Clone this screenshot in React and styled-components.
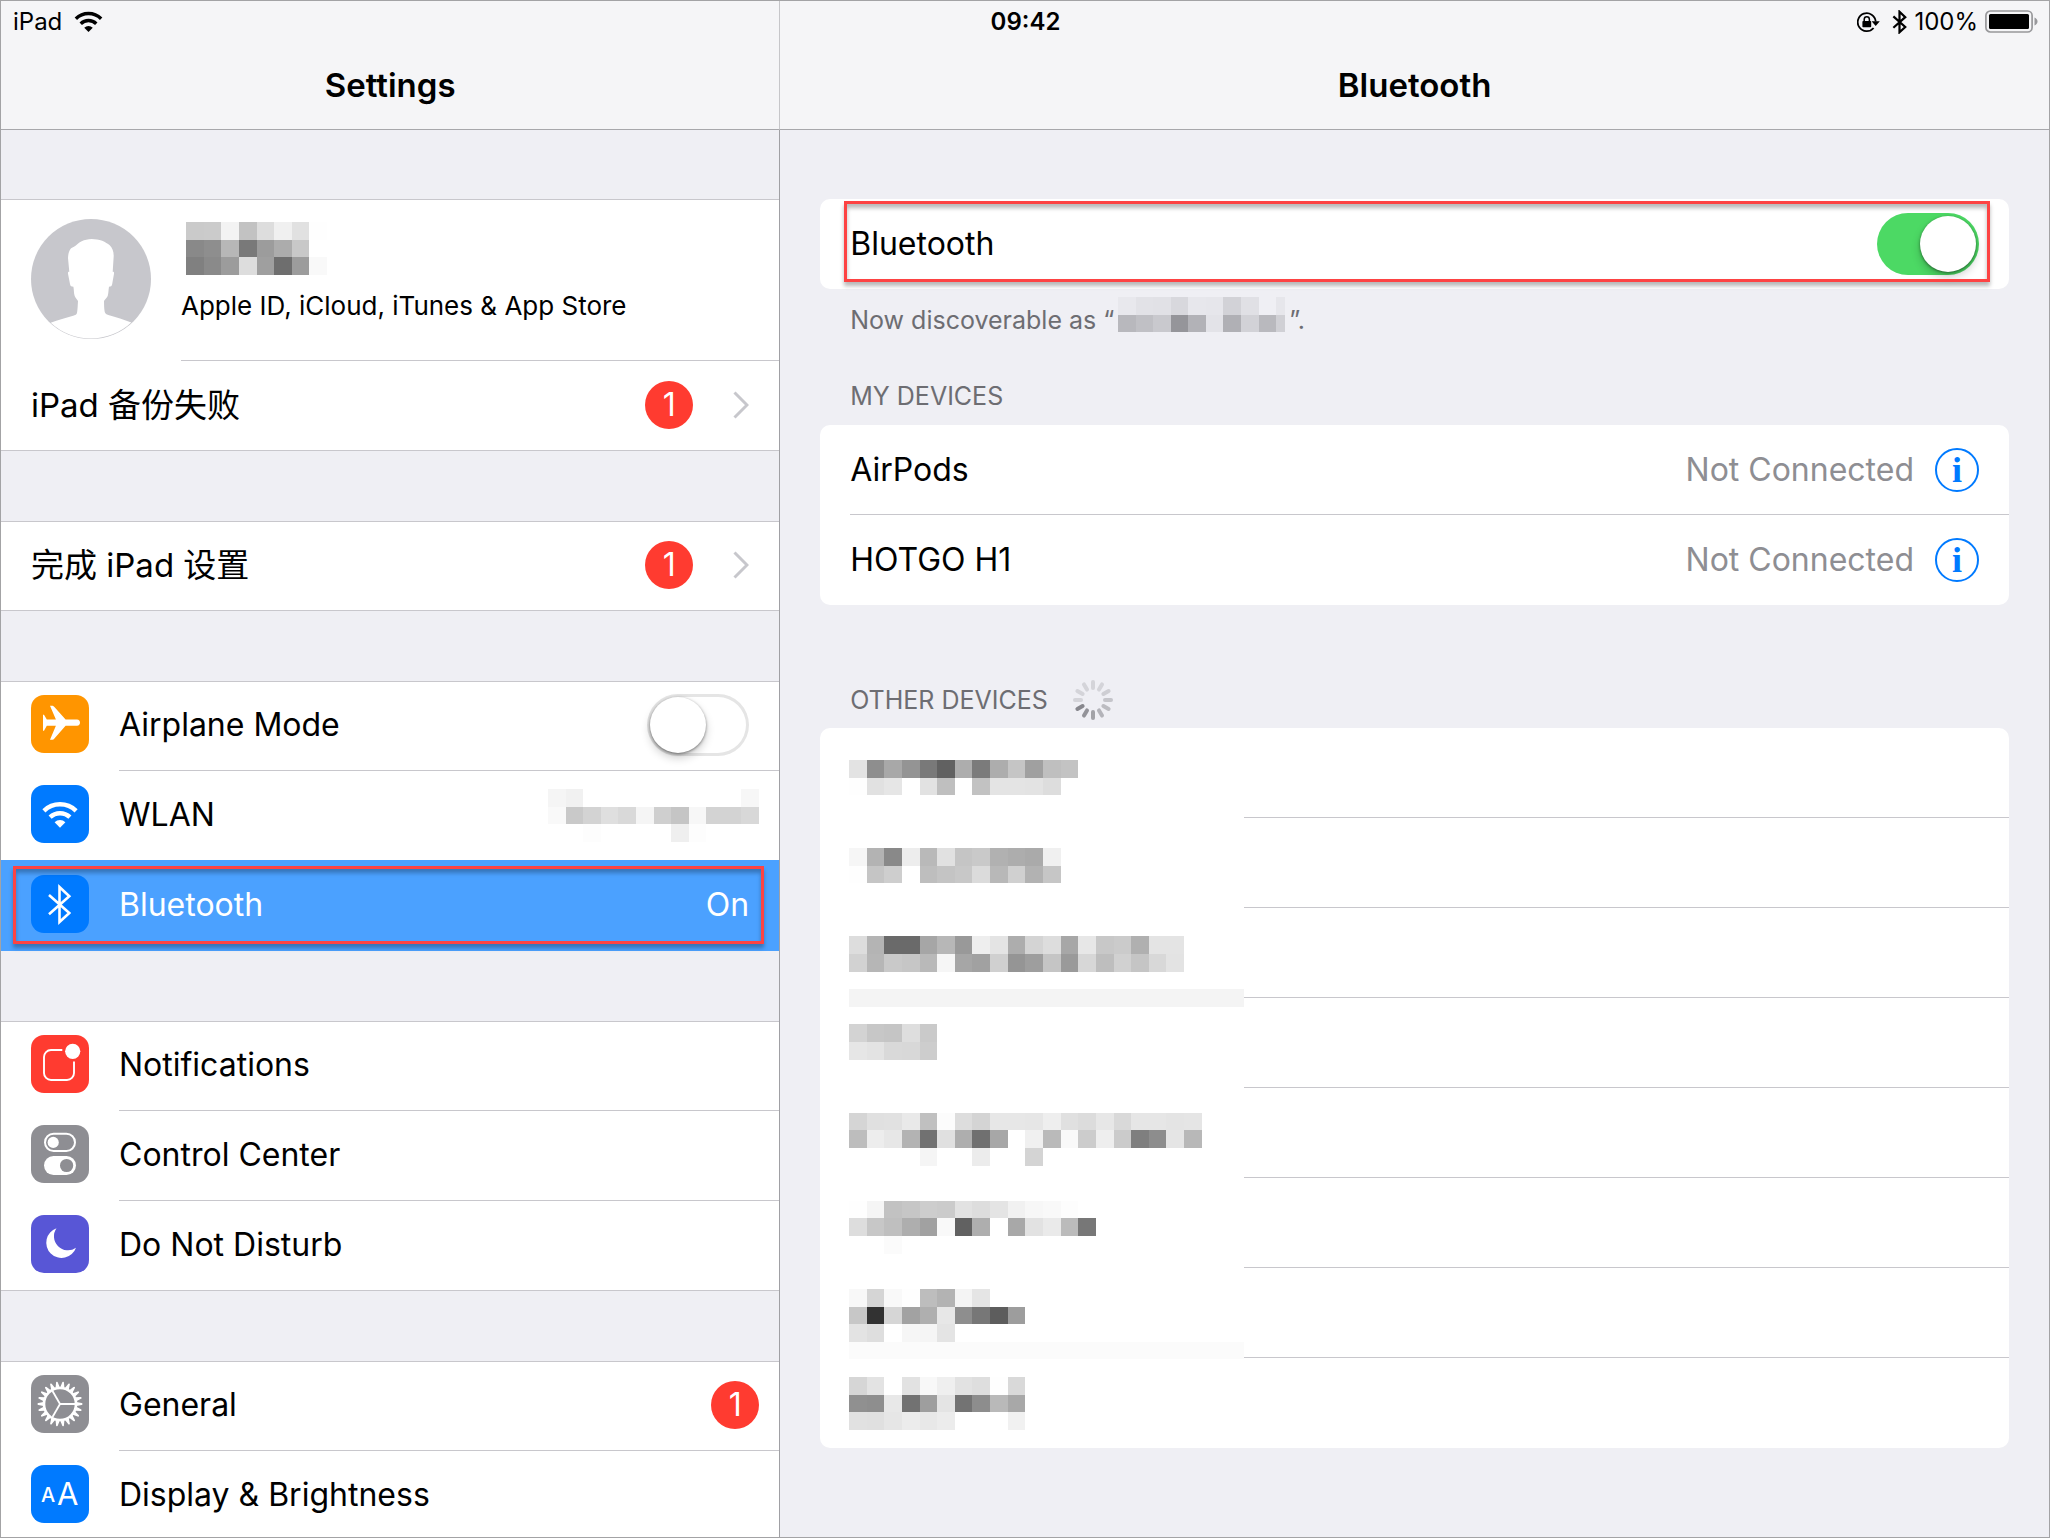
import React, { useState } from 'react';
import styled, { css, createGlobalStyle } from 'styled-components';

const GlobalStyle = createGlobalStyle`
  *, *::before, *::after { box-sizing: border-box; }
  body {
    margin: 0;
    background: #efeff4;
    color: #000;
    font-family: Inter, "Noto Sans CJK SC", sans-serif;
    font-size: 32px;
    line-height: 40px;
  }
  h1, h2, p, ul { margin: 0; padding: 0; }
`;

/* ---------- frame ---------- */

const Screen = styled.div`
  display: grid;
  grid-template-columns: 38% minmax(0, 1fr);
  grid-template-rows: 129px minmax(0, 1fr);
  height: 100vh;
  overflow: hidden;
  border: 1px solid #a3a3a5;
`;

const StatusBar = styled.header`
  grid-area: 1 / 1 / 2 / 3;
  z-index: 1;
  height: 42px;
  display: grid;
  grid-template-columns: 1fr auto 1fr;
  align-items: center;
  padding: 0 11px 0 12px;
  font-size: 24px;
  line-height: 28px;
`;

const StatusSide = styled.div`
  display: flex;
  align-items: center;
  justify-content: ${props => props.$end ? 'flex-end' : 'flex-start'};
  gap: ${props => props.$end ? '7px' : '12px'};
`;

const Clock = styled.time`
  font-weight: 600;
`;

const NavBar = styled.div`
  grid-area: 1 / ${props => props.$column};
  display: flex;
  align-items: flex-end;
  justify-content: center;
  padding-bottom: 24px;
  background: #f5f5f7;
  border-bottom: 1px solid #a7a7ab;
  ${props => props.$column === 2 && css`border-left: 1px solid #c6c6c9;`}
`;

const Title = styled.h1`
  font-size: 33px;
  line-height: 40px;
  font-weight: 600;
`;

const Sidebar = styled.nav`
  grid-area: 2 / 1;
  display: flex;
  flex-direction: column;
  gap: 70px;
  padding-top: 69px;
  overflow: hidden;
`;

const Detail = styled.main`
  grid-area: 2 / 2;
  padding: 69px 40px 0;
  border-left: 1px solid #a0a0a4;
  overflow: hidden;
`;

/* ---------- sidebar ---------- */

const Group = styled.ul`
  flex: none;
  list-style: none;
  background: #fff;
  box-shadow: inset 0 1px #c8c7cc, inset 0 -1px #c8c7cc;
`;

const Item = styled.li`
  position: relative;
  display: flex;
  align-items: center;
  gap: 30px;
  height: ${props => props.$tall ? '162px' : '90px'};
  padding-left: 30px;
  ${props => props.$selected && css`
    height: 91px;
    margin-top: -1px;
    padding-top: 1px;
    background: #4ba1ff;
    color: #fff;
  `}
`;

const Tile = styled.svg`
  flex: none;
  width: 58px;
  height: 58px;
  margin-bottom: 4px;
  border-radius: 13px;
  background: ${props => props.$color};
`;

const ItemBody = styled.div`
  flex: 1;
  align-self: stretch;
  display: flex;
  align-items: center;
  gap: 40px;
  padding: 0 ${props => props.$tight ? '20px' : '30px'} 1px 0;
  border-bottom: 1px solid #c8c7cc;
  ${Item}:last-child & { border-bottom-color: transparent; }
`;

const ItemLink = styled.a`
  flex: 1;
  color: inherit;
  text-decoration: none;
  &:lang(zh) { font-size: 33px; }
`;

const ItemLabel = styled.label`
  flex: 1;
`;

const Badge = styled.span`
  display: flex;
  align-items: center;
  justify-content: center;
  width: 48px;
  height: 48px;
  border-radius: 50%;
  background: #ff3b30;
  color: #fff;
`;

const Profile = styled.a`
  flex: 1;
  display: flex;
  flex-direction: column;
  gap: 15px;
  padding-bottom: 15px;
  color: inherit;
  text-decoration: none;
  font-size: 26px;
  line-height: 32px;
  svg { margin-left: 5px; }
`;

const Avatar = styled.svg`
  flex: none;
  width: 120px;
  height: 120px;
  margin-bottom: 2px;
`;

/* ---------- controls ---------- */

const Switch = styled.input.attrs({ type: 'checkbox', role: 'switch' })`
  appearance: none;
  flex: none;
  display: block;
  width: 102px;
  height: 62px;
  margin: 0;
  padding: 3px;
  border-radius: 31px;
  background: #fff;
  box-shadow: inset 0 0 0 3px #e5e5e5;
  &::before {
    content: "";
    display: block;
    width: 56px;
    height: 56px;
    border-radius: 50%;
    background: #fff;
    box-shadow: 0 5px 10px rgba(0, 0, 0, 0.2), 0 1px 3px rgba(0, 0, 0, 0.45);
  }
  &:checked {
    background: #4cd964;
    box-shadow: none;
  }
  &:checked::before { margin-left: 40px; }
`;

const InfoButton = styled.button`
  flex: none;
  width: 44px;
  height: 44px;
  padding: 0;
  border: 2px solid #007aff;
  border-radius: 50%;
  background: none;
  color: #007aff;
  font: bold 36px/36px "Liberation Serif", serif;
`;

// red marker drawn over a row
const Marker = styled.div`
  position: absolute;
  inset: ${props => props.$inset};
  border: 3px solid #fd4343;
  box-shadow: 0 4px 4px rgba(0, 0, 0, 0.28), inset 0 4px 4px rgba(0, 0, 0, 0.28);
  pointer-events: none;
`;

/* ---------- detail ---------- */

const Card = styled.ul`
  position: relative;
  list-style: none;
  border-radius: 10px;
  background: #fff;
`;

const Row = styled.li`
  display: flex;
  align-items: center;
  gap: 21px;
  height: 90px;
  margin-left: 30px;
  padding-right: 30px;
  border-bottom: 1px solid #c8c7cc;
  &:last-of-type { border-bottom-color: transparent; }
`;

const RowLabel = styled.label`
  flex: 1;
`;

const Name = styled.span`
  flex: 1;
`;

const State = styled.span`
  color: #8e8e93;
`;

const Note = styled.p`
  display: flex;
  align-items: center;
  gap: 4px;
  height: 62px;
  padding-left: 30px;
  color: #6d6d72;
  font-size: 25px;
  line-height: 32px;
  svg { margin-bottom: 11px; }
`;

const SectionTitle = styled.h2`
  display: flex;
  align-items: center;
  gap: 25px;
  height: ${props => props.$after === 'card' ? '123px' : '74px'};
  padding: ${props => props.$after === 'card' ? '67px' : '15px'} 30px 0;
  color: #6d6d72;
  font-size: 25px;
  line-height: 32px;
  font-weight: 400;
`;

const Cover = styled.div`
  position: absolute;
  top: 32px;
  left: 29px;
  background: #fff;
`;

/* ---------- mosaics ---------- */

// each row: [y, grey levels in hex]
const nameRows = [
  [0, 'ca cb f3 c2 dd f0 e1 fe'],
  [1, '89 8e b7 79 9c ac c8'],
  [2, '80 8a 9c dd 9f 6e 9c f9'],
];

const wlanRows = [
  [0, 'f5 f1 ff ff ff ff ff ff ff ff ff f7'],
  [1, 'f9 c9 d3 df d9 f5 cf c5 f7 d3 d3 d8'],
  [2, 'ff ff fd ff ff ff ff ef fd'],
];

const ipadRows = [
  [0, 'e8 e2 e1 d8 e7 e6 d2 e0 ef e6'],
  [1, 'b8 c0 c9 95 b2 e3 b0 d2 b9 d0'],
];

const deviceRows = [
  [0, 'e3 8e a8 94 79 61 ad 7b ad c5 a0 bf c3'],
  [1, 'fe e1 e6 ff e2 bf ff c2 e4 e4 e3 dd'],
  [5, 'f6 b3 89 ed b9 e1 c5 c9 b1 ad aa f0'],
  [6, 'fe c5 ce ff be c4 c8 db b8 d0 b2 c6'],
  [10, 'dd b4 6a 6a a6 b7 99 ee e4 ad d4 dd a7 e7 c8 cb b0 e4 e4'],
  [11, 'd2 b6 c9 c6 b9 f6 a6 a1 d0 95 9e c5 9a d7 be d1 c5 d8 e3'],
  [13, 'f4 f4 f4 f4 f4 f4 f4 f4 f4 f4 f4 f4 f4 f4 f4 f4 f4 f4 f4 f4 f4 f4 f4'],
  [15, 'd3 c7 c5 de ca'],
  [16, 'e6 e3 d9 d8 cd'],
  [20, 'd5 e0 e1 e9 c0 fc dd d4 e7 e7 e6 ee e0 dc e7 d9 e6 e6 e4 e5'],
  [21, 'bd ed e7 b3 71 e0 ae 70 a7 ff f0 ba f9 cc ee cb 7f 8d e5 b8'],
  [22, 'ff ff ff ff f5 ff ff ec ff ff d4'],
  [25, 'fe f5 c2 c6 cd cb e2 dd e4 f1 f7 f9 fd'],
  [26, 'dd c7 bf ae a1 f9 61 ae ff a8 e2 ea bb 77'],
  [27, 'ff ff fb'],
  [30, 'f8 d5 f9 fe bd b3 f4 e5'],
  [31, 'c7 32 d6 a2 af e7 8e 77 5d 9d'],
  [32, 'e3 de ff f6 f5 e4'],
  [33, 'fb fb fb fb fb fb fb fb fb fb fb fb fb fb fb fb fb fb fb fb fb fb fb'],
  [35, 'd6 e3 ff e2 f8 ef e2 de fe d9'],
  [36, '90 8e e8 72 9e e4 73 8d b9 a8'],
  [37, 'e1 e0 e6 ec e8 ec ff ff ff f1'],
];

const MosaicSvg = styled.svg`
  display: block;
  flex: none;
`;

function Mosaic({ rows, cols, lines, width, height, tint = 0 }) {
  return (
    <MosaicSvg
      width={width}
      height={height}
      viewBox={`0 0 ${cols} ${lines}`}
      preserveAspectRatio="none"
      shapeRendering="crispEdges"
      aria-hidden="true"
    >
      {rows.map(([y, cells]) => cells.split(' ').map((cell, x) => {
        const g = parseInt(cell, 16);
        if (g === 255) return null;
        return <rect key={`${x}-${y}`} x={x} y={y} width="1" height="1" fill={`rgb(${g},${g},${g + tint})`} />;
      }))}
    </MosaicSvg>
  );
}

/* ---------- icons ---------- */

const WifiShape = () => (
  <>
    <path d="M12.9 25.8a23.2 23.2 0 0 1 32.2 0M19.1 32.2a14.3 14.3 0 0 1 19.8 0" fill="none" stroke="currentColor" strokeWidth="4.4" />
    <path d="M29 42.8l-5.4-5.6a7.8 7.8 0 0 1 10.8 0z" fill="currentColor" />
  </>
);

const BluetoothShape = ({ width }) => (
  <path d="M18 20l20.3 18-9.8 9V12l9.8 9.2L18 39.3" fill="none" stroke="currentColor" strokeWidth={width} />
);

const AirplaneIcon = () => (
  <Tile viewBox="0 0 58 58" $color="#ff9500">
    <path
      d="M46 24.6c2 0 3 1.6 3 3.1s-1 3.1-3 3.1H34.6L23.4 43.4c-.8 1-1.5 1.3-2.4 1.3h-2L24.9 30.8H15.8L13 35.7h-1V19.8h1l2.8 4.8h9.1L19 10.7h2c.9 0 1.6.4 2.4 1.3l11.2 12.6z"
      fill="#fff"
    />
  </Tile>
);

const WlanIcon = () => (
  <Tile viewBox="0 0 58 58" $color="#007aff" color="#fff"><WifiShape /></Tile>
);

const BluetoothIcon = () => (
  <Tile viewBox="0 0 58 58" $color="#007aff" color="#fff"><BluetoothShape width={2.6} /></Tile>
);

const NotificationsIcon = () => (
  <Tile viewBox="0 0 58 58" $color="#ff3b30">
    <path d="M31.3 15H20a7 7 0 0 0-7 7v16a7 7 0 0 0 7 7h16a7 7 0 0 0 7-7V26.5" fill="none" stroke="#fff" strokeWidth="1.9" />
    <circle cx="41.7" cy="16.3" r="7.6" fill="#fff" />
  </Tile>
);

const ControlIcon = () => (
  <Tile viewBox="0 0 58 58" $color="#8e8e93">
    <rect x="14" y="8.8" width="30" height="17.2" rx="8.6" fill="none" stroke="#fff" strokeWidth="2" />
    <circle cx="22.2" cy="17.4" r="5.6" fill="#fff" />
    <rect x="13" y="31" width="32" height="19" rx="9.5" fill="#fff" />
    <circle cx="35.6" cy="40.5" r="6.6" fill="#8e8e93" />
  </Tile>
);

const MoonIcon = () => (
  <Tile viewBox="0 0 58 58" $color="#5856d6">
    <path d="M25.5 13.2A15.3 15.3 0 1 0 45 32.7 14 14 0 0 1 25.5 13.2z" fill="#fff" />
  </Tile>
);

const teeth = Array.from({ length: 22 }, (_, i) => (i * 360) / 22);

const GearIcon = () => (
  <Tile viewBox="0 0 58 58" $color="#8e8e93">
    <g transform="translate(29 29)" fill="#fff" stroke="none">
      {teeth.map(a => <path key={a} d="M16.5-2.1l5.1 1.2a.9.9 0 0 1 0 1.8l-5.1 1.2z" transform={`rotate(${a})`} />)}
      <circle r="16" fill="none" stroke="#fff" strokeWidth="2.6" />
      {[0, 120, 240].map(a => <path key={a} d="M0 0H15" stroke="#fff" strokeWidth="1.8" transform={`rotate(${a})`} />)}
    </g>
  </Tile>
);

const DisplayIcon = () => (
  <Tile viewBox="0 0 58 58" $color="#007aff" fill="#fff">
    <text x="10" y="37" fontSize="20" fontWeight="500">A</text>
    <text x="26" y="40" fontSize="31">A</text>
  </Tile>
);

const LockIcon = () => (
  <svg width="28" height="22" viewBox="0 0 28 22" aria-hidden="true">
    <path d="M16.6 17A9 9 0 1 1 18.7 10.5" fill="none" stroke="#000" strokeWidth="1.8" />
    <path d="M14.6 10.2h8.2L18.7 15z" />
    <rect x="5.4" y="10" width="8.8" height="6.2" rx=".8" />
    <path d="M7.2 10.5V8.4a2.6 2.6 0 0 1 5.2 0v2.1" fill="none" stroke="#000" strokeWidth="1.5" />
  </svg>
);

const BatteryIcon = () => (
  <svg width="53" height="24" viewBox="0 0 53 24" aria-hidden="true">
    <rect x=".9" y="1" width="46.2" height="21" rx="4.5" fill="none" stroke="#98989b" strokeWidth="1.7" />
    <rect x="4" y="4" width="40" height="15" rx="1.5" />
    <path d="M49.5 7.5c4 1.5 4 6.5 0 8z" fill="#98989b" />
  </svg>
);

const Chevron = () => (
  <svg width="16" height="28" viewBox="0 0 16 28" aria-hidden="true">
    <path d="M1.5 1.5L14 14 1.5 26.5" fill="none" stroke="#c7c7cc" strokeWidth="3" />
  </svg>
);

// opacity of the twelve bars, clockwise from the top
const bars = [0.18, 0.18, 0.22, 0.28, 0.34, 0.4, 0.52, 0.62, 0.7, 0.18, 0.18, 0.18];

const Spinner = () => (
  <svg width="40" height="40" viewBox="-20 -20 40 40" aria-label="Searching">
    {bars.map((o, i) => (
      <path key={i} d="M0-12V-18" stroke="#5c5c62" strokeWidth="4" strokeLinecap="round" opacity={o} transform={`rotate(${i * 30})`} />
    ))}
  </svg>
);

const AvatarIcon = () => (
  <Avatar viewBox="0 0 120 120" aria-hidden="true">
    <circle cx="60" cy="60" r="60" fill="#c7c7cc" />
    <path
      d="M60.7 20c-4 0-7 1-10 2.2-3.5 1.5-5 4-7.7 5.5-3 1-5.5 3-6 11.3L38.3 52.7c-1.3 0-1.5.8-1.3 2l2 10.3c.4 2.5 1.5 2.5 3.4 2.7.6 3 .3 6 1.3 9.3.6 2 2.3 3 3.3 5-.3 4-.3 8-1 12-.6 1.6-1.5 2-3 2.5-8 2.2-16 4.5-23.3 7.2A59 59 0 0 0 100.300 103.500c-7.300-3-15-5-23-7.500-1.800-.6-3-1.300-3.600-3.300-.7-3.700-.6-7-.7-10.700 1-2 3-3 3.700-5 .9-3 .7-6 1.300-9.300 1.800 0 2.700-.4 3.200-2.700l1.800-10.300c.2-1.200 0-2-1.300-2L82.700 37c0-5-1.500-8-4-10.700-2-1.600-4.500-3-7.500-4.500C68 20.800 64 20 60.700 20z"
      fill="#fff"
    />
  </Avatar>
);

const devices = ['AirPods', 'HOTGO H1'];

function App() {
  const [airplane, setAirplane] = useState(false);
  const [bluetooth, setBluetooth] = useState(true);

  return (
    <>
      <GlobalStyle />
      <Screen>
        <StatusBar>
          <StatusSide>
            iPad
            <svg width="29" height="22" viewBox="11 16 36 28" aria-hidden="true"><WifiShape /></svg>
          </StatusSide>
          <Clock>09:42</Clock>
          <StatusSide $end>
            <LockIcon />
            <svg width="15" height="24" viewBox="16 9 25 41" aria-hidden="true"><BluetoothShape width={3.8} /></svg>
            <span>100%</span>
            <BatteryIcon />
          </StatusSide>
        </StatusBar>

        <NavBar $column={1}><Title>Settings</Title></NavBar>
        <NavBar $column={2}><Title>Bluetooth</Title></NavBar>

        <Sidebar>
          <Group>
            <Item $tall>
              <AvatarIcon />
              <ItemBody>
                <Profile href="#apple-id">
                  <Mosaic rows={nameRows} cols={8} lines={3} width={141} height={53} />
                  Apple ID, iCloud, iTunes &amp; App Store
                </Profile>
              </ItemBody>
            </Item>
            <Item>
              <ItemBody>
                <ItemLink href="#backup" lang="zh">iPad 备份失败</ItemLink>
                <Badge>1</Badge>
                <Chevron />
              </ItemBody>
            </Item>
          </Group>

          <Group>
            <Item>
              <ItemBody>
                <ItemLink href="#setup" lang="zh">完成 iPad 设置</ItemLink>
                <Badge>1</Badge>
                <Chevron />
              </ItemBody>
            </Item>
          </Group>

          <Group>
            <Item>
              <AirplaneIcon />
              <ItemBody>
                <ItemLabel htmlFor="airplane">Airplane Mode</ItemLabel>
                <Switch id="airplane" checked={airplane} onChange={e => setAirplane(e.target.checked)} />
              </ItemBody>
            </Item>
            <Item>
              <WlanIcon />
              <ItemBody $tight>
                <ItemLink href="#wlan">WLAN</ItemLink>
                <Mosaic rows={wlanRows} cols={12} lines={3} width={211} height={53} />
              </ItemBody>
            </Item>
            <Item $selected>
              <BluetoothIcon />
              <ItemBody>
                <ItemLink href="#bluetooth" aria-current="page">Bluetooth</ItemLink>
                <span>{bluetooth ? 'On' : 'Off'}</span>
              </ItemBody>
              <Marker $inset="6px 15px 7px 12px" />
            </Item>
          </Group>

          <Group>
            <Item>
              <NotificationsIcon />
              <ItemBody><ItemLink href="#notifications">Notifications</ItemLink></ItemBody>
            </Item>
            <Item>
              <ControlIcon />
              <ItemBody><ItemLink href="#control-center">Control Center</ItemLink></ItemBody>
            </Item>
            <Item>
              <MoonIcon />
              <ItemBody><ItemLink href="#do-not-disturb">Do Not Disturb</ItemLink></ItemBody>
            </Item>
          </Group>

          <Group>
            <Item>
              <GearIcon />
              <ItemBody $tight>
                <ItemLink href="#general">General</ItemLink>
                <Badge>1</Badge>
              </ItemBody>
            </Item>
            <Item>
              <DisplayIcon />
              <ItemBody><ItemLink href="#display">Display &amp; Brightness</ItemLink></ItemBody>
            </Item>
          </Group>
        </Sidebar>

        <Detail>
          <Card>
            <Row>
              <RowLabel htmlFor="bluetooth">Bluetooth</RowLabel>
              <Switch id="bluetooth" checked={bluetooth} onChange={e => setBluetooth(e.target.checked)} />
            </Row>
            <Marker $inset="2px 19px 7px 24px" />
          </Card>
          <Note>
            Now discoverable as “
            <Mosaic rows={ipadRows} cols={9.5} lines={2} width={167} height={35} tint={5} />
            ”.
          </Note>

          <SectionTitle>MY DEVICES</SectionTitle>
          <Card>
            {devices.map(name => (
              <Row key={name}>
                <Name>{name}</Name>
                <State>Not Connected</State>
                <InfoButton aria-label={`About ${name}`}>i</InfoButton>
              </Row>
            ))}
          </Card>

          <SectionTitle $after="card">OTHER DEVICES <Spinner /></SectionTitle>
          <Card>
            {Array.from({ length: 8 }, (_, i) => <Row key={i} />)}
            <Cover>
              <Mosaic rows={deviceRows} cols={22.4} lines={38} width={395} height={670} />
            </Cover>
          </Card>
        </Detail>
      </Screen>
    </>
  );
}

export default App;
